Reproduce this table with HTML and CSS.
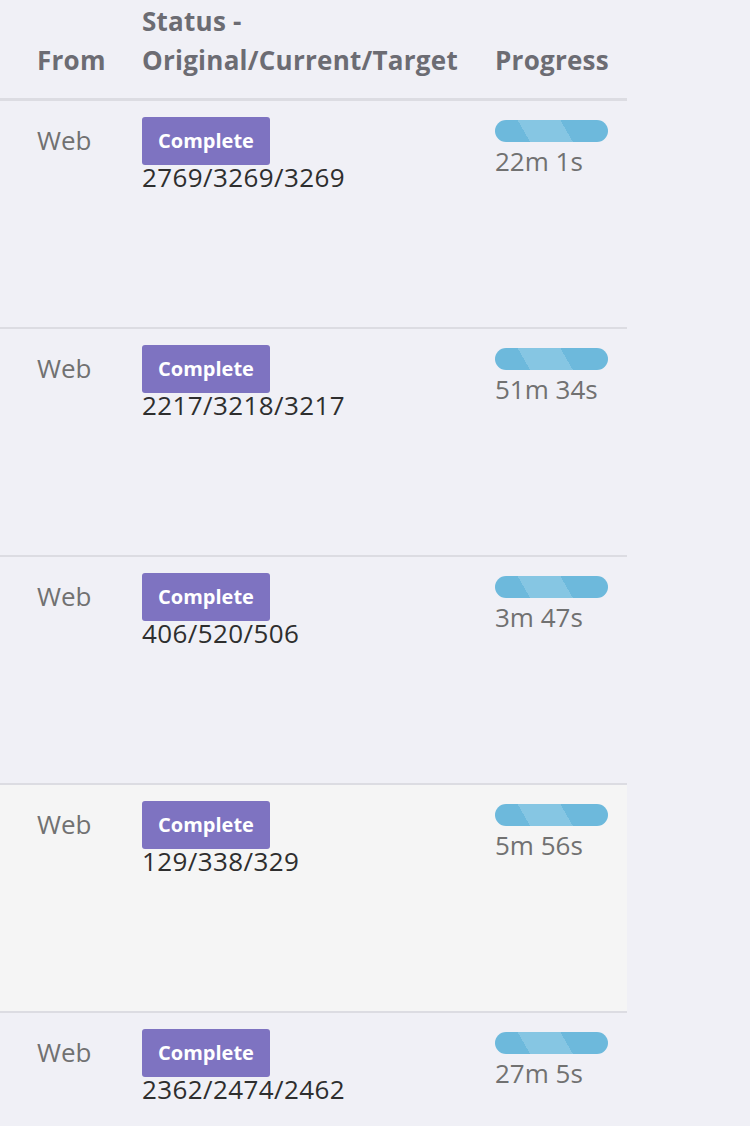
FILE: index.html
```html
<!DOCTYPE html>
<html>
<head>
<meta charset="utf-8">
<link rel="stylesheet" href="styles.css">
</head>
<body>
<div class="table">
  <div class="head">
    <div class="th">From</div>
    <div class="th">Status -<br>Original/Current/Target</div>
    <div class="th">Progress</div>
  </div>
  <div class="row">
    <div class="from">Web</div>
    <div class="status"><span class="badge">Complete</span><div class="nums">2769/3269/3269</div></div>
    <div class="progress"><div class="bar"></div><div class="time">22m 1s</div></div>
  </div>
  <div class="row">
    <div class="from">Web</div>
    <div class="status"><span class="badge">Complete</span><div class="nums">2217/3218/3217</div></div>
    <div class="progress"><div class="bar"></div><div class="time">51m 34s</div></div>
  </div>
  <div class="row">
    <div class="from">Web</div>
    <div class="status"><span class="badge">Complete</span><div class="nums">406/520/506</div></div>
    <div class="progress"><div class="bar"></div><div class="time">3m 47s</div></div>
  </div>
  <div class="row row-hover">
    <div class="from">Web</div>
    <div class="status"><span class="badge">Complete</span><div class="nums">129/338/329</div></div>
    <div class="progress"><div class="bar"></div><div class="time">5m 56s</div></div>
  </div>
  <div class="row">
    <div class="from">Web</div>
    <div class="status"><span class="badge">Complete</span><div class="nums">2362/2474/2462</div></div>
    <div class="progress"><div class="bar"></div><div class="time">27m 5s</div></div>
  </div>
</div>
</body>
</html>
```
FILE: styles.css
```css
html, body {
  margin: 0;
  padding: 0;
  background: #f0f0f6;
  font-family: "Open Sans", "Liberation Sans", sans-serif;
}
.table {
  width: 627px;
}
.head, .row {
  display: grid;
  grid-template-columns: 105px 353px 1fr;
  padding-left: 37px;
  box-sizing: border-box;
}
.head {
  height: 101px;
  align-items: end;
  border-bottom: 3px solid #dcdce2;
}
.th {
  font-size: 26px;
  font-weight: 700;
  line-height: 39px;
  color: #6c6c73;
  padding-bottom: 18px;
  letter-spacing: 0.25px;
  white-space: nowrap;
}
.row {
  height: 228px;
  padding-top: 16px;
  border-bottom: 2px solid #dcdce2;
  align-items: start;
}
.row-hover {
  background: #f5f5f5;
}
.from {
  font-size: 26px;
  line-height: 46px;
  color: #717171;
}
.badge {
  display: inline-block;
  width: 128px;
  height: 48px;
  line-height: 48px;
  text-align: center;
  background: #7e73c1;
  color: #ffffff;
  font-size: 20px;
  font-weight: 700;
  border-radius: 3px;
}
.nums {
  font-size: 26px;
  line-height: 24px;
  letter-spacing: 0.4px;
  color: #2e2e2e;
  white-space: nowrap;
}
.bar {
  margin-top: 3px;
  width: 113px;
  height: 22px;
  border-radius: 11px;
  background: linear-gradient(60deg, #6db9dc 0, #6db9dc 28%, #86c6e3 28%, #86c6e3 62%, #6db9dc 62%, #6db9dc 100%);
}
.time {
  font-size: 26px;
  line-height: 38px;
  color: #717171;
  white-space: nowrap;
}
```
